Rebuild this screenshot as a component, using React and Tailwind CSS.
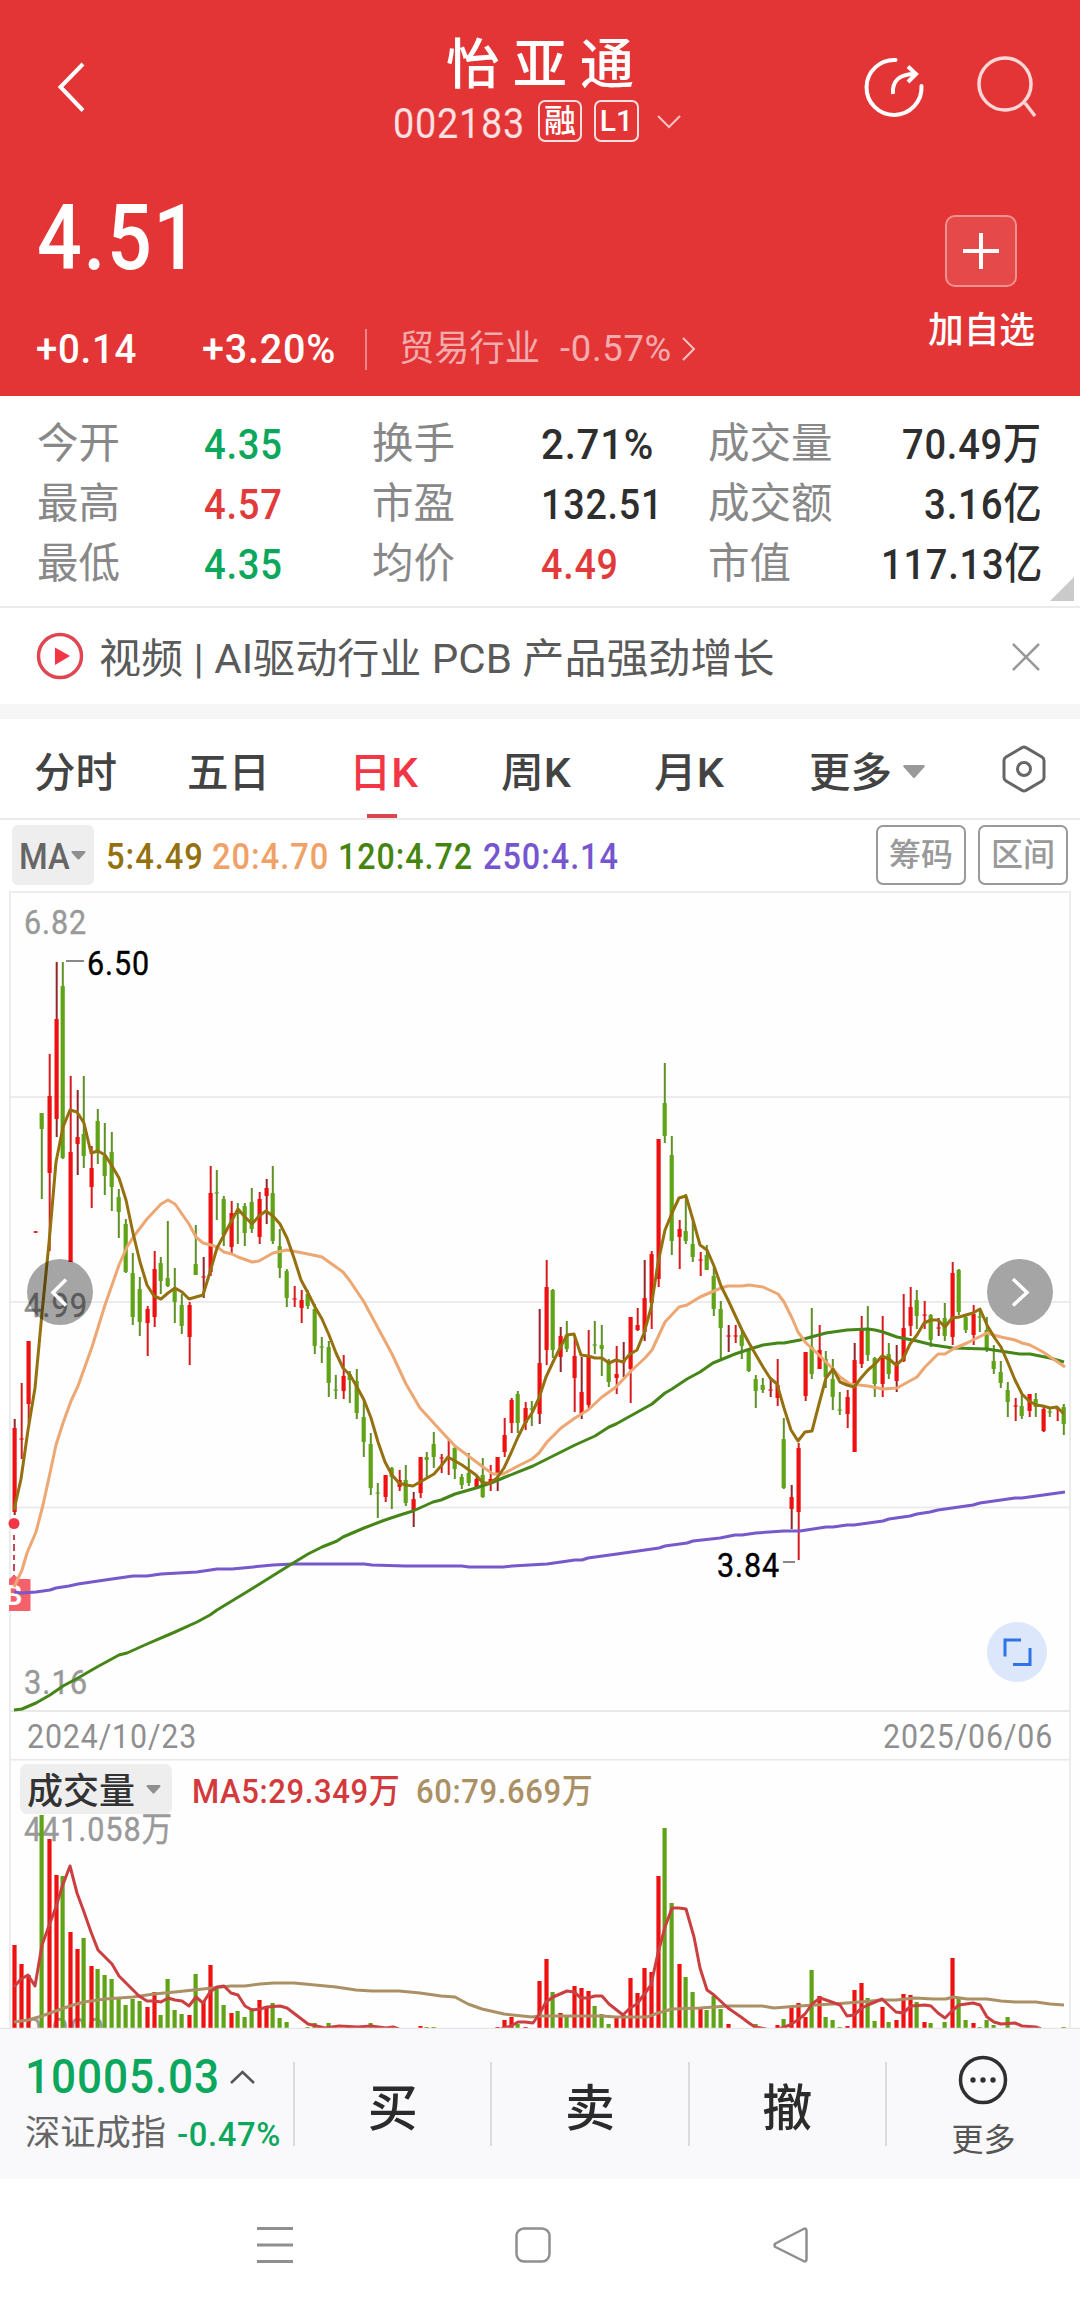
import React, { useLayoutEffect, useRef } from "react";

/* One line of text condensed or widened to the width of its box. */
function Fit({ className = "", children }) {
  const box = useRef(null);
  const ink = useRef(null);
  useLayoutEffect(() => {
    ink.current.style.transform = `scaleX(${box.current.clientWidth / ink.current.offsetWidth})`;
  }, [children]);
  return (
    <span ref={box} className={`block shrink-0 whitespace-nowrap ${className}`}>
      <span ref={ink} className="inline-block origin-left">{children}</span>
    </span>
  );
}

const RED = "#ee1111";
const GREEN = "#61a317";

/* direction, high, body top, body bottom, low */
const CANDLES = `r 1419 1428 1512 1515|r 1383 1438 1440 1459|r 1341 1341 1404 1423|r 1231 1231 1233 1233|g 1113 1113 1129 1199
r 1054 1096 1173 1251|r 962 1019 1119 1137|g 962 986 1158 1159|r 1076 1152 1262 1262|r 1090 1137 1144 1175
g 1076 1134 1156 1168|r 1146 1168 1187 1208|g 1109 1121 1151 1164|g 1123 1156 1176 1195|g 1132 1152 1187 1211
g 1189 1197 1212 1238|g 1219 1224 1272 1273|g 1253 1273 1317 1325|g 1277 1289 1322 1336|r 1306 1309 1323 1356
r 1251 1269 1317 1327|g 1257 1263 1281 1294|g 1221 1278 1286 1287|g 1268 1288 1302 1323|g 1294 1305 1326 1334
r 1302 1305 1337 1365|g 1225 1264 1275 1275|r 1257 1276 1278 1298|r 1166 1193 1272 1276|g 1170 1192 1194 1220
g 1196 1199 1235 1246|r 1201 1213 1247 1253|g 1203 1211 1214 1244|g 1203 1206 1233 1246|g 1188 1202 1229 1233
r 1192 1199 1237 1244|r 1179 1188 1196 1224|g 1166 1193 1241 1244|g 1229 1246 1268 1278|g 1269 1271 1298 1307
r 1286 1298 1300 1307|r 1290 1300 1308 1323|g 1290 1294 1306 1309|g 1304 1309 1346 1354|g 1337 1346 1348 1363
g 1341 1347 1383 1397|g 1375 1389 1391 1399|r 1355 1376 1391 1399|g 1371 1374 1380 1403|g 1369 1381 1413 1419
g 1400 1417 1442 1457|g 1433 1444 1488 1495|g 1483 1492 1494 1518|r 1475 1475 1497 1502|g 1467 1468 1477 1509
r 1470 1480 1487 1491|g 1465 1480 1503 1506|r 1492 1499 1511 1527|r 1457 1457 1493 1498|g 1452 1457 1460 1477
g 1432 1444 1457 1468|r 1454 1457 1459 1473|r 1440 1457 1459 1475|g 1447 1448 1469 1479|g 1474 1477 1485 1489
g 1453 1473 1483 1486|r 1475 1479 1489 1489|g 1458 1475 1497 1498|r 1465 1479 1483 1491|r 1457 1457 1475 1491
r 1418 1435 1452 1457|r 1398 1400 1423 1433|g 1391 1394 1423 1433|r 1402 1408 1423 1430|g 1401 1408 1410 1426
r 1309 1363 1414 1424|r 1260 1287 1350 1365|g 1289 1290 1350 1358|r 1327 1336 1357 1372|g 1321 1335 1349 1352
r 1335 1356 1378 1412|r 1357 1392 1414 1419|r 1330 1355 1405 1409|g 1321 1344 1346 1354|g 1325 1345 1349 1376
g 1359 1362 1382 1387|r 1346 1374 1378 1394|r 1342 1361 1363 1377|r 1317 1317 1369 1403|r 1308 1325 1330 1331
r 1260 1298 1332 1341|r 1251 1254 1303 1329|r 1139 1139 1279 1287|g 1063 1103 1136 1143|g 1136 1155 1241 1255
r 1220 1229 1237 1269|g 1194 1231 1241 1244|g 1220 1244 1257 1262|r 1252 1259 1261 1276|g 1245 1255 1270 1270
g 1267 1276 1309 1316|g 1301 1309 1328 1359|r 1325 1335 1337 1352|r 1325 1335 1337 1343|g 1330 1335 1346 1359
g 1348 1349 1371 1372|g 1375 1379 1391 1408|g 1378 1385 1390 1393|r 1378 1389 1391 1397|r 1359 1385 1398 1406
g 1418 1439 1488 1489|r 1485 1497 1509 1529|r 1443 1448 1512 1560|r 1352 1352 1396 1401|g 1308 1347 1374 1379
r 1325 1350 1369 1369|g 1351 1359 1377 1388|g 1359 1379 1397 1410|g 1392 1409 1411 1415|r 1390 1397 1414 1428
r 1343 1360 1452 1452|r 1316 1329 1364 1368|g 1306 1329 1355 1361|g 1357 1358 1384 1397|r 1316 1357 1384 1397
g 1343 1354 1374 1379|r 1345 1362 1381 1392|r 1294 1328 1361 1362|r 1287 1307 1326 1336|g 1290 1300 1316 1329
r 1301 1314 1316 1329|g 1314 1315 1340 1347|r 1318 1327 1329 1336|g 1303 1318 1336 1341|r 1262 1273 1337 1345
g 1269 1270 1312 1315|g 1314 1317 1330 1333|r 1305 1314 1335 1345|g 1308 1316 1318 1332|g 1317 1330 1350 1352
g 1345 1361 1369 1374|g 1361 1372 1383 1388|g 1382 1390 1402 1417|r 1398 1405 1407 1421|g 1395 1406 1416 1419
r 1394 1394 1411 1417|g 1393 1399 1407 1417|r 1406 1409 1431 1432|g 1407 1411 1413 1417|r 1407 1408 1410 1421
g 1404 1407 1424 1435`
  .split(/[|\n]/)
  .map((row) => {
    const [d, ...v] = row.trim().split(" ");
    return [d, ...v.map(Number)];
  });

const MA5 = [1510, 1479, 1430, 1388, 1313, 1243, 1162, 1127, 1110, 1112, 1123, 1153, 1151, 1155, 1166, 1178, 1200, 1233, 1262, 1285, 1296, 1299, 1293, 1288, 1292, 1299, 1297, 1295, 1272, 1248, 1235, 1222, 1209, 1217, 1224, 1216, 1211, 1216, 1224, 1238, 1258, 1280, 1293, 1307, 1319, 1335, 1353, 1368, 1375, 1387, 1400, 1418, 1442, 1462, 1475, 1483, 1485, 1486, 1482, 1478, 1474, 1466, 1457, 1461, 1465, 1470, 1475, 1483, 1483, 1478, 1468, 1453, 1437, 1423, 1413, 1398, 1377, 1362, 1348, 1335, 1334, 1355, 1356, 1358, 1358, 1363, 1360, 1362, 1354, 1350, 1333, 1308, 1263, 1230, 1213, 1198, 1196, 1220, 1245, 1250, 1266, 1286, 1300, 1315, 1330, 1343, 1355, 1367, 1378, 1384, 1408, 1430, 1441, 1432, 1431, 1404, 1378, 1369, 1382, 1385, 1387, 1378, 1370, 1364, 1356, 1359, 1365, 1359, 1344, 1335, 1323, 1320, 1320, 1327, 1318, 1317, 1315, 1313, 1309, 1325, 1337, 1347, 1363, 1380, 1394, 1401, 1405, 1406, 1408, 1407, 1414]
  .map((y, i) => `${14 + 7 * i},${y}`)
  .join(" ");

const MA20 = "14,1587 22,1570 27,1553 36,1532 43,1505 50,1473 56,1445 63,1423 71,1401 78,1386 92,1347 105,1305 119,1265 127,1247 134,1236 147,1219 161,1204 168,1200 175,1204 182,1214 189,1224 196,1237 203,1243 211,1245 217,1247 224,1252 232,1254 238,1257 252,1262 259,1261 273,1253 287,1250 308,1254 322,1257 343,1272 350,1281 364,1302 378,1328 392,1354 406,1384 420,1408 441,1431 455,1446 483,1467 493,1474 503,1474 518,1466 532,1459 539,1453 547,1442 561,1428 575,1418 588,1410 602,1397 616,1387 631,1371 645,1358 652,1350 665,1322 679,1307 687,1305 700,1297 721,1288 728,1286 742,1286 749,1285 763,1287 778,1294 784,1302 792,1318 798,1332 806,1343 819,1355 833,1369 840,1377 850,1384 868,1386 883,1389 897,1388 917,1377 925,1367 938,1354 945,1354 953,1349 967,1343 987,1333 1001,1337 1015,1340 1022,1343 1030,1345 1043,1352 1065,1367";

const MA120 = "14,1710 22,1709 36,1703 50,1695 63,1686 78,1678 97,1667 119,1655 127,1653 147,1644 168,1635 175,1632 197,1622 210,1615 217,1610 245,1593 266,1580 290,1565 308,1554 322,1547 337,1541 343,1537 364,1528 385,1520 400,1515 413,1511 433,1502 441,1500 455,1494 476,1488 491,1483 503,1478 533,1466 561,1452 575,1445 595,1436 609,1427 616,1424 652,1404 665,1393 672,1389 687,1379 700,1372 713,1363 735,1354 750,1349 763,1345 778,1343 784,1343 800,1340 826,1333 847,1330 868,1329 875,1330 883,1332 897,1337 917,1341 933,1345 953,1348 987,1349 1020,1354 1030,1354 1050,1358 1064,1362";

const MA250 = "14,1592 22,1593 36,1592 50,1590 56,1588 69,1586 78,1584 105,1580 133,1576 147,1576 161,1574 197,1572 217,1569 232,1569 273,1565 293,1564 364,1564 372,1565 405,1566 462,1566 469,1567 503,1567 512,1566 547,1564 575,1560 582,1560 588,1558 617,1554 652,1549 659,1548 665,1546 687,1543 693,1541 720,1538 735,1535 742,1535 756,1533 784,1531 800,1531 826,1527 833,1527 847,1525 854,1525 883,1521 889,1519 910,1516 917,1514 930,1512 938,1510 973,1505 980,1503 1015,1498 1022,1498 1065,1492";

/* index: top of the volume bar */
const VOLUME = {
  0: 1945, 1: 1964, 2: 1975, 4: 1815, 5: 1839, 6: 1875, 7: 1876, 8: 1932, 9: 1949, 10: 1938, 11: 1966, 12: 1969, 13: 1975, 14: 1979, 15: 1999, 16: 2005, 17: 1999, 18: 2001, 19: 2007,
  20: 1992, 21: 2015, 22: 1979, 23: 2010, 24: 2014, 25: 2015, 26: 1974, 27: 2001, 28: 1965, 29: 1989, 30: 2005, 31: 2013, 32: 2011, 33: 2017, 34: 2008, 35: 2000, 36: 2006, 37: 2003, 38: 2018, 39: 2022,
  42: 2027, 43: 2023, 45: 2023, 51: 2023, 58: 2026, 59: 2027, 60: 2027, 69: 2027, 70: 2020, 71: 2017, 72: 2024, 73: 2027, 75: 1981, 76: 1959, 77: 1992, 78: 2013, 79: 2016,
  80: 1986, 81: 1988, 82: 1991, 83: 2006, 84: 2014, 85: 2024, 86: 2018, 87: 2015, 88: 1978, 89: 1993, 90: 1968, 91: 1972, 92: 1876, 93: 1828, 94: 1903, 95: 1964, 96: 1977, 97: 1992, 98: 2009, 99: 2010,
  100: 1996, 101: 2009, 102: 2024, 106: 2024, 109: 2025, 110: 2019, 111: 2007, 112: 2003, 113: 2017, 114: 1970, 115: 1996, 116: 2017, 117: 2020, 118: 2027, 119: 2026,
  120: 1990, 121: 1983, 122: 1998, 123: 2021, 124: 2007, 125: 2022, 126: 2020, 127: 1994, 128: 1995, 129: 2002, 130: 2022, 131: 2023, 133: 2022, 134: 1958, 135: 1998, 136: 2020, 137: 2023, 138: 2027, 139: 2020,
  140: 2025, 142: 2017, 150: 2027,
};

const VMA5 = [
  "14,1987 21,1979 28,1975 35,1986 42,1945 50,1923 56,1907 62,1887 70,1866 77,1893 84,1912 91,1932 98,1950 105,1957 112,1964 119,1976 126,1983 133,1990 139,1996 147,2001 154,2001 161,2002 168,1998 175,2000 182,2001 189,2006 196,1997 203,2003 210,1992 217,1987 224,1986 231,1993 238,1995 245,2006 252,2010 260,2009 267,2007 280,2006 287,2008 308,2024 325,2028 339,2026 358,2027 371,2026 386,2028 393,2027 399,2029",
  "501,2029 511,2026 518,2022 525,2022 533,2023 540,2013 546,2002 553,1997 567,1991 574,1992 581,1998 588,1998 595,1996 602,1996 609,2004 623,2015 630,2008 637,2004 651,1985 658,1953 665,1927 672,1908 679,1908 686,1909 694,1937 700,1968 707,1990 714,1995 728,2008 741,2017 749,2023 755,2027 766,2029",
  "779,2029 790,2025 799,2019 805,2014 812,2004 820,1998 826,2000 840,2005 847,2016 854,2015 862,2008 868,2005 882,1999 896,2012 903,2013 911,2006 925,2005 931,2006 938,2013 945,2018 953,2010 959,2005 973,2003 980,2005 987,2017 994,2022 1001,2024 1015,2023 1022,2026 1036,2027 1041,2029",
];

const VMA60 = "14,2022 28,2020 42,2016 50,2013 70,2006 84,2002 105,1999 133,1997 154,1994 175,1992 203,1989 231,1986 245,1986 260,1984 274,1983 294,1983 315,1985 336,1987 356,1990 372,1991 399,1991 420,1993 441,1996 455,1997 468,2004 482,2009 504,2014 532,2017 540,2016 602,2016 616,2017 647,2017 658,2013 672,2009 700,2008 728,2006 762,2006 774,2008 799,2006 833,2004 860,2002 882,2000 896,2000 915,1998 933,1999 946,1999 953,1997 967,1999 987,1999 1001,2001 1015,2002 1036,2002 1050,2004 1064,2005";

function ChartLabel({ x, y, w, color, size = 34, children }) {
  return (
    <text x={x} y={y} fill={color} fontSize={size} textLength={w} letterSpacing="1" lengthAdjust="spacingAndGlyphs" stroke={color} strokeWidth="0.4">
      {children}
    </text>
  );
}

function PriceChart() {
  return (
    <svg className="block h-[821px] w-full" viewBox="0 891 1080 821">
      <rect x="10" y="892" width="1060" height="840" fill="#fefefe" stroke="#ececec" strokeWidth="2" />
      <path d="M10 1097H1070M10 1302H1070M10 1507.500H1070" stroke="#ececec" strokeWidth="2" />
      <path d="M10 1711H1070" stroke="#e8e8e8" strokeWidth="2" />
      <ChartLabel x={24} y={934} w={63} color="#999999">6.82</ChartLabel>
      <ChartLabel x={24} y={1694} w={64} color="#999999">3.16</ChartLabel>
      <ChartLabel x={24} y={1317} w={64} color="#8c8c8c">4.99</ChartLabel>
      <path d="M14 1535v41" stroke="#c04a5a" strokeWidth="2" strokeDasharray="5 4 7 4" />
      <path d="M9 1579l5-4 6 4h9.500q1 0 1 1v30q0 1-1 1H9z" fill="#f5606b" />
      <svg x="9" y="1579" width="22" height="33">
        <text x="-4" y="26" fill="#fff" fontSize="27" fontWeight="700">B</text>
      </svg>
      {CANDLES.map(([d, hi, top, bottom, lo], i) => {
        const x = 14 + 7 * i + (d === "r" ? 0.6 : -0.3);
        const thin = bottom - top <= 2;
        const wick = d === "r" ? (i % 3 ? "#d81c1e" : "#93262b") : "#5f9126";
        return (
          <g key={i}>
            <rect x={x - 0.9} y={hi} width="2" height={lo - hi} fill={wick} />
            <rect x={x - 2.1} y={top} width="4.200" height={bottom - top} rx={thin ? 0 : 0.6} fill={d === "r" ? RED : GREEN} opacity={thin ? 0.6 : 1} />
          </g>
        );
      })}
      <circle cx="14" cy="1523.500" r="5.500" fill="#f23645" />
      <g fill="none" strokeWidth="3" strokeLinejoin="round">
        <polyline points={MA250} stroke="#7659cb" />
        <polyline points={MA120} stroke="#468518" />
        <polyline points={MA20} stroke="#eda772" />
        <polyline points={MA5} stroke="#94700f" />
      </g>
      <path d="M66 961h18M783 1562h12" stroke="#888" strokeWidth="2" />
      <ChartLabel x={87} y={975} w={63} color="#000">6.50</ChartLabel>
      <ChartLabel x={717} y={1577} w={63} color="#000">3.84</ChartLabel>
      <circle cx="60" cy="1292" r="33" fill="#000" fillOpacity="0.35" />
      <path d="M66 1279.500l-13 13 13 13" fill="none" stroke="#fff" strokeWidth="3.500" />
      <circle cx="1020" cy="1292" r="33" fill="#a5a5a5" />
      <path d="M1013 1279l14 13.500-14 13" fill="none" stroke="#fff" strokeWidth="3.500" />
      <circle cx="1017" cy="1652" r="30" fill="#dde7fc" />
      <path d="M1005 1656.500V1640h16M1030 1648v16.500h-17" fill="none" stroke="#2f73e4" strokeWidth="3" />
    </svg>
  );
}

function VolumeChart() {
  return (
    <svg className="block h-[270px] w-full" viewBox="0 1759 1080 270">
      <path d="M10 1759V2028M1070 1759V2028" stroke="#ececec" strokeWidth="2" />
      <path d="M10 1759.500H1070" stroke="#e8e8e8" strokeWidth="2" />
      <ChartLabel x={24} y={1841} w={149} color="#999999">441.058万</ChartLabel>
      <ChartLabel x={25} y={2042} w={80} color="#999999">0.000</ChartLabel>
      {Object.entries(VOLUME).map(([i, top]) => {
        const up = CANDLES[i][0] === "r";
        return <rect key={i} x={14 + 7 * i + (up ? 0.5 : -0.4) - 2.100} y={top} width="4.200" height={2028 - top} fill={up ? RED : GREEN} />;
      })}
      <g fill="none" strokeWidth="3" strokeLinejoin="round">
        <polyline points={VMA60} stroke="#ab9066" />
        {VMA5.map((p) => <polyline key={p} points={p} stroke="#cb3f40" />)}
      </g>
      <path d="M0 2028.500H1080" stroke="#e6e6e8" strokeWidth="1.500" />
    </svg>
  );
}

function Header() {
  return (
    <header className="h-[396px] bg-[#e33536] text-white">
      <div className="flex h-[150px] items-start">
        <svg className="mt-[60px] ml-[54px] h-[54px] w-[34px]" viewBox="54 60 34 54" fill="none" stroke="#fff" strokeWidth="4">
          <path d="M83 64L60.500 87 83 110.500" />
        </svg>
        <div className="mt-[36px] ml-[305px] w-[294px]">
          <div className="pl-[53px] text-[54px] leading-[60px] font-medium tracking-[13px] whitespace-nowrap">怡亚通</div>
          <div className="mt-[4px] flex h-[42px] items-center">
            <Fit className="mt-[4px] w-[132px] text-[43px] leading-[44px] tracking-[0.02em] text-white/85">002183</Fit>
            <span className="ml-[13px] flex h-[42px] w-[44px] items-center justify-center rounded-[7px] border-2 border-white/85 text-[32px] leading-none font-medium">融</span>
            <span className="ml-[12px] flex h-[42px] w-[45px] items-center justify-center rounded-[7px] border-2 border-white/85 text-[30px] leading-none font-medium">L1</span>
            <svg className="mt-[2px] ml-[17px] h-[16px] w-[26px]" viewBox="0 0 26 16" fill="none" stroke="#fff" strokeOpacity="0.7" strokeWidth="2"><path d="M2 2l11 11L24 2" /></svg>
          </div>
        </div>
        <svg className="mt-[54px] ml-[173px] h-[66px] w-[66px]" viewBox="860 54 66 66" fill="none" stroke="#fff" strokeWidth="4">
          <path d="M895.500 60A27.500 27.500 0 1 0 921.500 86" strokeLinecap="round" />
          <path d="M893 94c-1-13 6-20 22-20M908 66.500l8 7.500-8 8" />
        </svg>
        <svg className="mt-[54px] ml-[48px] h-[66px] w-[66px]" viewBox="974 54 66 66" fill="none" stroke="#fff" strokeOpacity="0.8" strokeWidth="3.500">
          <circle cx="1005" cy="84" r="26" />
          <path d="M1025 103l10 13" />
        </svg>
      </div>
      <div className="flex h-[246px]">
        <div className="w-[928px]">
          <Fit className="mt-[43px] ml-[37px] w-[163px] text-[91px] leading-[90px] font-medium tracking-[0.02em]">4.51</Fit>
          <div className="mt-[44px] flex h-[44px] items-center">
            <Fit className="ml-[36px] w-[101px] text-[41px] leading-[44px] font-medium tracking-[0.02em]">+0.14</Fit>
            <Fit className="ml-[65px] w-[134px] text-[41px] leading-[44px] font-medium tracking-[0.02em]">+3.20%</Fit>
            <i className="ml-[29px] h-[41px] w-[2px] bg-white/40" />
            <Fit className="ml-[32px] w-[141px] text-[36px] leading-[44px] text-white/60">贸易行业</Fit>
            <Fit className="ml-[20px] w-[112px] text-[37px] leading-[44px] tracking-[0.02em] text-white/60">-0.57%</Fit>
            <svg className="ml-[10px] h-[24px] w-[14px]" viewBox="0 0 14 24" fill="none" stroke="#fff" strokeOpacity="0.7" strokeWidth="2"><path d="M1 1l11 11L1 23" /></svg>
          </div>
        </div>
        <div className="flex w-[106px] flex-col items-center">
          <span className="mt-[65px] flex h-[72px] w-[72px] items-center justify-center rounded-[10px] border-2 border-white/40 bg-white/10">
            <svg className="h-[36px] w-[36px]" viewBox="0 0 36 36" stroke="#fff" strokeWidth="4"><path d="M0 18h36M18 0v36" /></svg>
          </span>
          <Fit className="mt-[22px] w-[107px] text-[36px] leading-[44px] font-medium">加自选</Fit>
        </div>
      </div>
    </header>
  );
}

const LABEL = "text-[41.500px] leading-[60px] text-[#888888]";
const VALUE = "text-[43px] leading-[60px] font-medium tracking-[0.02em]";

function Stats() {
  return (
    <section className="relative h-[212px] border-b-2 border-[#ebebeb] pt-[18px]">
      <div className="grid grid-cols-[167px_168px_169px_167px_1fr] pl-[37px]">
        <span className={LABEL}>今开</span><Fit className={`w-[79px] text-[#0ba75c] ${VALUE}`}>4.35</Fit>
        <span className={LABEL}>换手</span><Fit className={`w-[113px] text-[#2e2e2e] ${VALUE}`}>2.71%</Fit>
        <div className="flex justify-between pr-[38px]"><span className={LABEL}>成交量</span><Fit className={`w-[140px] text-[#2e2e2e] ${VALUE}`}>70.49万</Fit></div>
        <span className={LABEL}>最高</span><Fit className={`w-[79px] text-[#e23a3b] ${VALUE}`}>4.57</Fit>
        <span className={LABEL}>市盈</span><Fit className={`w-[122px] text-[#2e2e2e] ${VALUE}`}>132.51</Fit>
        <div className="flex justify-between pr-[37px]"><span className={LABEL}>成交额</span><Fit className={`w-[119px] text-[#2e2e2e] ${VALUE}`}>3.16亿</Fit></div>
        <span className={LABEL}>最低</span><Fit className={`w-[79px] text-[#0ba75c] ${VALUE}`}>4.35</Fit>
        <span className={LABEL}>均价</span><Fit className={`w-[78px] text-[#e23a3b] ${VALUE}`}>4.49</Fit>
        <div className="flex justify-between pr-[37px]"><span className={LABEL}>市值</span><Fit className={`w-[162px] text-[#2e2e2e] ${VALUE}`}>117.13亿</Fit></div>
      </div>
      <svg className="absolute right-[6px] bottom-[5px] h-[24px] w-[24px]" viewBox="0 0 24 24"><path d="M24 0v24H0z" fill="#cacaca" /></svg>
    </section>
  );
}

function News() {
  return (
    <section className="flex h-[111px] items-center border-b-[15px] border-[#f6f6f6]">
      <svg className="ml-[36px] h-[48px] w-[48px]" viewBox="0 0 48 48">
        <circle cx="24" cy="24" r="21.500" fill="none" stroke="#e04550" strokeWidth="3.500" />
        <path d="M19 15.500l15 8.500-15 9z" fill="#f23645" />
      </svg>
      <Fit className="mt-[6px] ml-[15px] w-[676px] text-[41px] leading-[60px] text-[#5a5a5a]">视频 | AI驱动行业 PCB 产品强劲增长</Fit>
      <svg className="mt-[1px] ml-[237px] h-[28px] w-[28px]" viewBox="0 0 28 28" stroke="#999" strokeWidth="2.500"><path d="M1 1l26 26M27 1L1 27" /></svg>
    </section>
  );
}

const TAB = "text-[41px] leading-[60px] font-medium";

function Tabs() {
  return (
    <nav className="flex h-[101px] items-start border-b-2 border-[#ebebeb] pt-[24px] pl-[34px] text-[#434343]">
      <Fit className={`w-[83px] ${TAB}`}>分时</Fit>
      <Fit className={`ml-[70px] w-[83px] ${TAB}`}>五日</Fit>
      <div className="ml-[79px] w-[68px] text-[#f23645]">
        <Fit className={`w-[69px] ${TAB}`}>日K</Fit>
        <i className="mt-[11px] ml-[18px] block h-[4px] w-[30px] bg-[#d8474f]" />
      </div>
      <Fit className={`ml-[84px] w-[70px] ${TAB}`}>周K</Fit>
      <Fit className={`ml-[83px] w-[70px] ${TAB}`}>月K</Fit>
      <Fit className={`ml-[85px] w-[83px] ${TAB}`}>更多</Fit>
      <svg className="mt-[22px] ml-[11px] h-[13px] w-[22px]" viewBox="0 0 22 13"><path d="M1 0h20q1.500 1 0 2.500l-9 10q-1 1-2 0L1 2.500Q-.5 1 1 0z" fill="#999" /></svg>
      <svg className="mt-[2px] ml-[77px] h-[48px] w-[44px]" viewBox="0 0 44 48" fill="none" stroke="#666" strokeWidth="3">
        <path d="M20 2.600q2-1 4 0l16 9.400q2 1.200 2 3.400v17.200q0 2.200-2 3.400l-16 9.400q-2 1-4 0L4 36q-2-1.200-2-3.400V15.400Q2 13.200 4 12z" />
        <circle cx="22" cy="24" r="6.500" />
      </svg>
    </nav>
  );
}

const MA = "text-[36px] leading-[60px] font-medium tracking-[0.03em]";

function Indicators() {
  return (
    <div className="flex h-[71px] items-start pt-[5px] pl-[12px]">
      <div className="flex h-[60px] w-[82px] items-center rounded-[6px] bg-[#eeeeee]">
        <Fit className="mt-[3px] ml-[7px] w-[51px] text-[36px] leading-[60px] font-medium text-[#666]">MA</Fit>
        <svg className="ml-[1px] h-[9px] w-[15px]" viewBox="0 0 15 9"><path d="M1 0h13q1 1 0 2L8.500 8q-1 1-2 0L1 2Q0 1 1 0z" fill="#8f8f92" /></svg>
      </div>
      <div className="mt-[2px] flex">
        <Fit className={`ml-[12px] w-[98px] text-[#94700f] ${MA}`}>5:4.49</Fit>
        <Fit className={`ml-[8px] w-[117px] text-[#f0a167] ${MA}`}>20:4.70</Fit>
        <Fit className={`ml-[9px] w-[135px] text-[#45850f] ${MA}`}>120:4.72</Fit>
        <Fit className={`ml-[10px] w-[136px] text-[#7656cf] ${MA}`}>250:4.14</Fit>
      </div>
      <span className="ml-[257px] flex h-[60px] w-[90px] items-center justify-center rounded-[7px] border-2 border-[#999] text-[32px] leading-none font-medium text-[#999]">筹码</span>
      <span className="ml-[12px] flex h-[60px] w-[90px] items-center justify-center rounded-[7px] border-2 border-[#999] text-[32px] leading-none font-medium text-[#999]">区间</span>
    </div>
  );
}

const DATE = "mt-[1px] w-[170px] text-[34px] leading-[46px] tracking-[0.03em] text-[#8f8f8f]";

function Charts() {
  return (
    <section>
      <PriceChart />
      <div className="mx-[9px] flex h-[47px] justify-between border-x-2 border-[#ececec] bg-[#fefefe] pr-[16px] pl-[16px]">
        <Fit className={DATE}>2024/10/23</Fit>
        <Fit className={DATE}>2025/06/06</Fit>
      </div>
      <div className="relative h-[270px] bg-[#fefefe]">
        <VolumeChart />
        <div className="absolute top-[5px] left-[20px] flex h-[50px] items-center">
          <div className="flex h-[50px] w-[152px] items-center rounded-[7px] bg-[#eeeeee]">
            <Fit className="mt-[5px] ml-[7px] w-[108px] text-[36px] leading-[50px] font-medium text-[#333]">成交量</Fit>
            <svg className="ml-[11px] h-[9px] w-[15px]" viewBox="0 0 15 9"><path d="M1 0h13q1 1 0 2L8.500 8q-1 1-2 0L1 2Q0 1 1 0z" fill="#8f8f92" /></svg>
          </div>
          <Fit className="mt-[3px] ml-[20px] w-[208px] text-[34px] leading-[50px] font-medium tracking-[0.02em] text-[#d23a3b]">MA5:29.349万</Fit>
          <Fit className="mt-[3px] ml-[16px] w-[177px] text-[34px] leading-[50px] font-medium tracking-[0.02em] text-[#ab9066]">60:79.669万</Fit>
        </div>
      </div>
    </section>
  );
}

function TradeBar() {
  return (
    <footer className="flex h-[150px] bg-[#f9f9fc]">
      <div className="w-[293px] pt-[22px]">
        <div className="flex items-center">
          <Fit className="mt-[1px] ml-[25px] w-[195px] text-[48px] leading-[50px] font-medium tracking-[0.02em] text-[#0ba75c]">10005.03</Fit>
          <svg className="ml-[10px] h-[14px] w-[25px]" viewBox="0 0 25 14" fill="none" stroke="#555" strokeWidth="2.500"><path d="M1 13L12.500 2 24 13" /></svg>
        </div>
        <div className="mt-[9px] flex items-center">
          <Fit className="ml-[25px] w-[141px] text-[35px] leading-[46px] text-[#666]">深证成指</Fit>
          <Fit className="ml-[11px] w-[104px] text-[34px] leading-[46px] font-medium tracking-[0.02em] text-[#0ba75c]">-0.47%</Fit>
        </div>
      </div>
      {["买", "卖", "撤"].map((t) => (
        <div key={t} className="mt-[33px] flex h-[84px] w-[197.300px] items-center justify-center border-l-2 border-[#dcdce0] text-[50px] leading-[60px] font-medium text-[#2b2b2b]">
          <span className="mt-[9px]">{t}</span>
        </div>
      ))}
      <div className="mt-[33px] flex h-[84px] flex-1 flex-col items-center border-l-2 border-[#dcdce0]">
        <svg className="-mt-[7px] h-[50px] w-[50px] shrink-0" viewBox="0 0 50 50">
          <circle cx="25" cy="25" r="22.500" fill="none" stroke="#2f2f2f" strokeWidth="3.500" />
          <g fill="#2f2f2f"><circle cx="15" cy="25" r="2.700" /><circle cx="25" cy="25" r="2.700" /><circle cx="35" cy="25" r="2.700" /></g>
        </svg>
        <span className="mt-[17px] text-[32px] leading-[36px] text-[#555]">更多</span>
      </div>
    </footer>
  );
}

function SystemNav() {
  return (
    <div className="flex h-[132px] items-start bg-white pt-[47px]">
      <svg className="ml-[257px] h-[38px] w-[36px]" viewBox="0 0 36 38" stroke="#8f8f8f" strokeWidth="3"><path d="M0 2.500h36M0 19h36M0 35.500h36" /></svg>
      <svg className="ml-[222px] h-[38px] w-[36px]" viewBox="0 0 36 38" fill="none" stroke="#8f8f8f" strokeWidth="2.500"><rect x="1.500" y="2.500" width="33" height="33" rx="7.500" /></svg>
      <svg className="ml-[222px] h-[38px] w-[36px]" viewBox="0 0 36 38" fill="none" stroke="#8f8f8f" strokeWidth="2.500"><path d="M33.500 5v28q0 3.500-3 2L2.500 21q-2-1.500 0-3.500L30.500 3q3-1.500 3 2z" /></svg>
    </div>
  );
}

export default function App() {
  return (
    <div className="h-[2311px] w-[1080px] overflow-hidden bg-white font-[Roboto,'Noto_Sans_CJK_SC',sans-serif]">
      <Header />
      <Stats />
      <News />
      <Tabs />
      <Indicators />
      <Charts />
      <TradeBar />
      <SystemNav />
    </div>
  );
}
